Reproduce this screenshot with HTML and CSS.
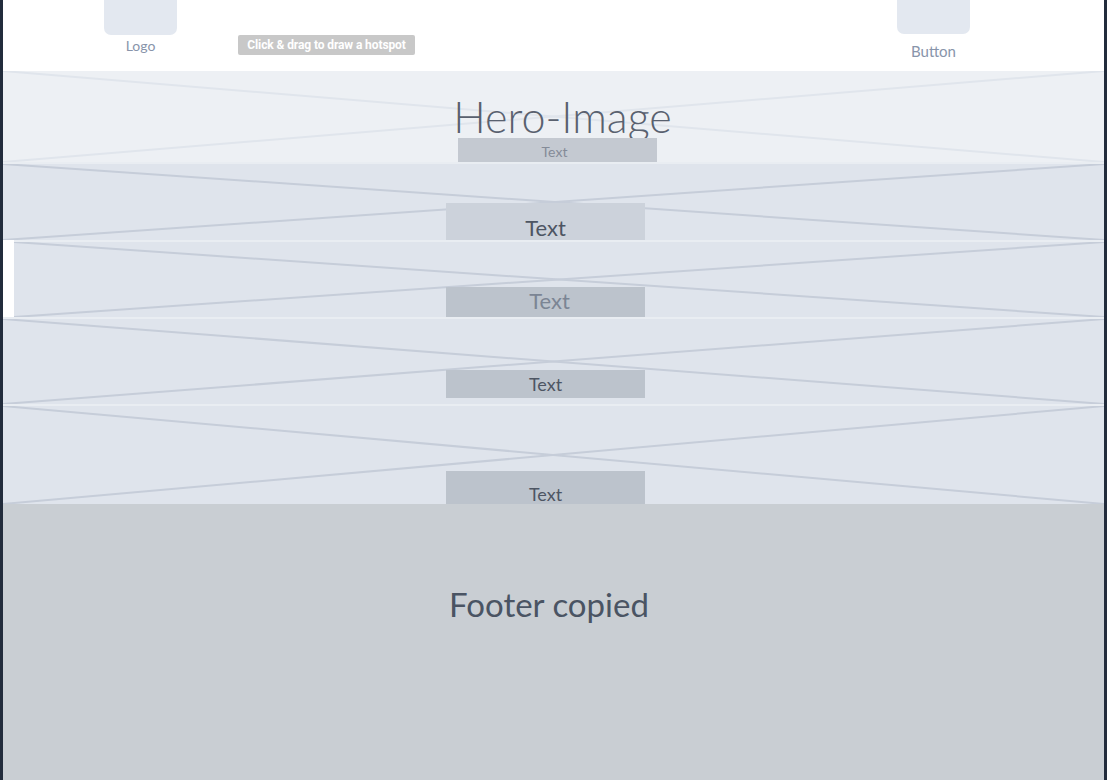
FILE: index.html
```html
<!DOCTYPE html>
<html lang="en">
<head>
<meta charset="utf-8">
<title>Wireframe</title>
<link rel="stylesheet" href="styles.css">
</head>
<body>
<div class="page">
  <header class="header">
    <div class="nav-item logo-item">
      <div class="nav-box"></div>
      <span class="nav-label">Logo</span>
    </div>
    <div class="nav-item button-item">
      <div class="nav-box"></div>
      <span class="nav-label">Button</span>
    </div>
    <div class="hotspot-tip">Click &amp; drag to draw a hotspot</div>
  </header>

  <section class="band hero">
    <svg class="xlines" viewBox="0 0 100 100" preserveAspectRatio="none"><line x1="0" y1="0" x2="100" y2="100"/><line x1="0" y1="100" x2="100" y2="0"/></svg>
    <h1 class="hero-title">Hero-Image</h1>
    <div class="tbox hero-box">Text</div>
  </section>

  <section class="band s2">
    <svg class="xlines" viewBox="0 0 100 100" preserveAspectRatio="none"><line x1="0" y1="0" x2="100" y2="100"/><line x1="0" y1="100" x2="100" y2="0"/></svg>
    <div class="tbox box2">Text</div>
  </section>

  <div class="s3-wrap">
    <section class="band s3">
      <svg class="xlines" viewBox="0 0 100 100" preserveAspectRatio="none"><line x1="0" y1="0" x2="100" y2="100"/><line x1="0" y1="100" x2="100" y2="0"/></svg>
      <div class="tbox box3">Text</div>
    </section>
  </div>

  <section class="band s4">
    <svg class="xlines" viewBox="0 0 100 100" preserveAspectRatio="none"><line x1="0" y1="0" x2="100" y2="100"/><line x1="0" y1="100" x2="100" y2="0"/></svg>
    <div class="tbox box4">Text</div>
  </section>

  <section class="band s5">
    <svg class="xlines" viewBox="0 0 100 100" preserveAspectRatio="none"><line x1="0" y1="0" x2="100" y2="100"/><line x1="0" y1="100" x2="100" y2="0"/></svg>
    <div class="tbox box5">Text</div>
  </section>

  <footer class="footer">
    <p class="footer-text">Footer copied</p>
  </footer>
</div>
</body>
</html>
```

FILE: styles.css
```css
* { box-sizing: border-box; }
html, body { margin: 0; padding: 0; }
body {
  background: #222c3c;
  font-family: Lato, "Open Sans", "Liberation Sans", sans-serif;
  height: 780px;
  overflow: hidden;
}
.page {
  margin: 0 3px;
  background: #ffffff;
  height: 780px;
  display: flex;
  flex-direction: column;
}

/* header */
.header {
  position: relative;
  height: 71px;
  flex: none;
  display: flex;
  justify-content: space-between;
  padding: 0 134px 0 101px;
}
.nav-item {
  width: 73px;
  display: flex;
  flex-direction: column;
  align-items: center;
}
.nav-box {
  width: 73px;
  background: #e3e8f0;
  border-radius: 0 0 7px 7px;
}
.logo-item .nav-box { height: 35px; }
.button-item .nav-box { height: 34px; }
.nav-label {
  font-size: 14px;
  color: #8894aa;
  line-height: 20px;
}
.logo-item .nav-label { margin-top: 1px; }
.button-item .nav-label { margin-top: 7px; font-size: 15px; }
.hotspot-tip {
  position: absolute;
  left: 235px;
  top: 35px;
  width: 177px;
  height: 20px;
  background: #c8c8c8;
  border-radius: 2px;
  color: #ffffff;
  font-family: Roboto, "Liberation Sans", sans-serif;
  font-weight: 700;
  font-size: 12px;
  line-height: 20px;
  text-align: center;
  letter-spacing: -0.1px;
}

/* bands */
.band {
  position: relative;
  flex: none;
  border-top: 2px solid #e9edf2;
  overflow: hidden;
}
.xlines {
  position: absolute;
  left: 0;
  top: 0;
  width: 100%;
  height: 100%;
}
.xlines line {
  stroke: #c6cdd9;
  stroke-width: 2;
  vector-effect: non-scaling-stroke;
}
.tbox {
  position: relative;
  width: 199px;
  background: #bcc3cc;
  text-align: center;
}

.hero {
  height: 91px;
  background: #edf0f4;
  border-top: none;
}
.hero .xlines line { stroke: #e0e5ec; }
.hero-title {
  position: relative;
  margin: 0;
  font-weight: 300;
  font-size: 43px;
  line-height: 44px;
  color: #59616f;
  text-align: center;
  padding-left: 18px;
  padding-top: 24px;
  height: 67px;
}
.hero-box {
  margin-left: 455px;
  height: 24px;
  background: #c4c9d1;
  color: #848b98;
  font-size: 14px;
  line-height: 28px;
  padding-right: 6px;
}

.s2 {
  height: 78px;
  background: #dfe4ec;
  padding-top: 39px;
}
.box2 {
  margin-left: 443px;
  height: 37px;
  background: #ccd2db;
  color: #4d5563;
  font-size: 22px;
  line-height: 50px;
}

.s3-wrap {
  flex: none;
  padding-left: 11px;
  background: #ffffff;
}
.s3 {
  height: 77px;
  background: #dfe4ec;
  padding-top: 45px;
}
.box3 {
  margin-left: 432px;
  height: 30px;
  color: #7b8594;
  font-size: 22px;
  line-height: 28px;
  padding-left: 8px;
}

.s4 {
  height: 87px;
  background: #dfe4ec;
  padding-top: 51px;
}
.box4 {
  margin-left: 443px;
  height: 28px;
  color: #4d5563;
  font-size: 18px;
  line-height: 28px;
}

.s5 {
  height: 100px;
  background: #dfe4ec;
  padding-top: 65px;
}
.box5 {
  margin-left: 443px;
  height: 35px;
  color: #4d5563;
  font-size: 18px;
  line-height: 46px;
}

/* footer */
.footer {
  flex: 1;
  background: #c9ced3;
}
.footer-text {
  margin: 0;
  padding-top: 80px;
  font-size: 33px;
  line-height: 40px;
  color: #4a5463;
  text-align: center;
  padding-right: 9px;
}
```
